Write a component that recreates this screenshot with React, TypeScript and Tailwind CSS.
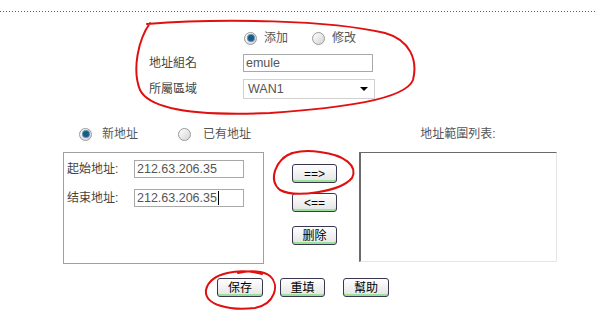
import React from 'react';

const Radio = ({ checked }: { checked?: boolean }) => (
  <span className="flex h-[13px] w-[13px] shrink-0 items-center justify-center rounded-full border border-[#9a9a9a] bg-gradient-to-br from-white to-[#d4d4d4]">
    {checked && <span className="h-[6px] w-[6px] rounded-full bg-[#1d5a86] shadow-[0_0_0_1px_#5c8fb5]" />}
  </span>
);

const Btn = ({ label, w }: { label: string; w: string }) => (
  <button
    className={`${w} flex h-[19px] items-center justify-center rounded-[3px] border border-[#3b3650] bg-gradient-to-b from-white to-[#e4e4e4] text-[12px] leading-none text-black shadow-[inset_0_-2px_0_#9be09b]`}
  >
    {label}
  </button>
);

export default function App() {
  return (
    <div className="relative h-[320px] w-[596px] overflow-hidden bg-white font-['Liberation_Sans','Noto_Sans_CJK_TC',sans-serif] text-[12px] text-[#444]">
      {/* dotted rule */}
      <div className="mt-[11px] h-px bg-[linear-gradient(to_right,#4e6b58_1px,transparent_1px)] bg-[length:3px_1px]" />

      {/* group name / zone */}
      <div className="mt-[19px] flex h-[14px] items-center pl-[244px]">
        <Radio checked />
        <span className="ml-[7px] w-[48px] text-[#555]">添加</span>
        <Radio />
        <span className="ml-[7px] text-[#555]">修改</span>
      </div>
      <div className="mt-[9px] flex h-[18px] items-center pl-[149px]">
        <span className="w-[94px] text-[#444]">地址組名</span>
        <div className="flex h-[18px] w-[130px] items-center border border-[#a8a8a8] px-[2px] text-[12.5px] text-[#555]">emule</div>
      </div>
      <div className="mt-[7px] flex h-[20px] items-center pl-[149px]">
        <span className="w-[94px] text-[#444]">所屬區域</span>
        <div className="flex h-[20px] w-[132px] items-center justify-between border border-[#d0d0d0] pl-[4px] pr-[6px] text-[12.5px] text-[#555]">
          <span>WAN1</span>
          <span className="h-0 w-0 border-x-[4px] border-t-[4px] border-x-transparent border-t-black" />
        </div>
      </div>

      {/* new / existing address */}
      <div className="mt-[28px] flex h-[14px] items-center pl-[79px]">
        <Radio checked />
        <span className="ml-[10px] w-[76px] text-[#555]">新地址</span>
        <Radio />
        <span className="ml-[12px] text-[#555]">已有地址</span>
        <span className="ml-auto mr-[39px] w-[198px] text-center text-[#555]">地址範圍列表:</span>
      </div>

      <div className="mt-[11px] flex items-start pl-[63px]">
        <div className="h-[112px] w-[201px] border border-[#a0a0a0] pl-[3px] pt-[7px]">
          <div className="flex h-[18px] items-center">
            <span className="w-[67px]">起始地址:</span>
            <div className="flex h-[18px] w-[110px] items-center border border-[#a8a8a8] px-[2px] text-[12.5px] text-[#555]">212.63.206.35</div>
          </div>
          <div className="mt-[11px] flex h-[18px] items-center">
            <span className="w-[67px]">结束地址:</span>
            <div className="flex h-[18px] w-[110px] items-center border border-[#a8a8a8] px-[2px] text-[12.5px] text-[#555]">
              212.63.206.35<span className="ml-px h-[14px] w-px bg-black" />
            </div>
          </div>
        </div>

        <div className="ml-[28px] flex w-[45px] flex-col pt-[12px]">
          <Btn label="==>" w="w-[45px]" />
          <div className="mt-[10px]"><Btn label="<==" w="w-[45px]" /></div>
          <div className="mt-[14px]"><Btn label="删除" w="w-[45px]" /></div>
        </div>

        <div className="ml-[22px] h-[110px] w-[198px] border-b border-l-2 border-r border-t border-b-[#e6e6e6] border-l-[#6a6a6a] border-r-[#e6e6e6] border-t-[#6a6a6a]" />
      </div>

      <div className="mt-[14px] flex pl-[217px]">
        <Btn label="保存" w="w-[46px]" />
        <div className="ml-[17px]"><Btn label="重填" w="w-[45px]" /></div>
        <div className="ml-[18px]"><Btn label="幫助" w="w-[46px]" /></div>
      </div>

      {/* hand-drawn red annotations */}
      <svg className="pointer-events-none absolute left-0 top-0" width="596" height="320" fill="none" stroke="#e01010" strokeWidth="2" strokeLinecap="round">
        <path d="M 147,24 C 220,18 330,20 385,33 C 410,40 418,60 413,80 C 405,100 340,108 270,113 C 200,116 150,110 140,90 C 132,70 138,40 150,23" />
        <path d="M 292,153 C 275,160 268,180 280,190 C 295,198 340,192 352,178 C 358,166 345,155 320,152 C 305,150 292,151 283,158" />
        <path d="M 262,274 C 240,268 210,272 206,290 C 204,305 230,311 255,308 C 275,304 280,285 270,276 C 264,271 250,270 238,273" />
      </svg>
    </div>
  );
}
